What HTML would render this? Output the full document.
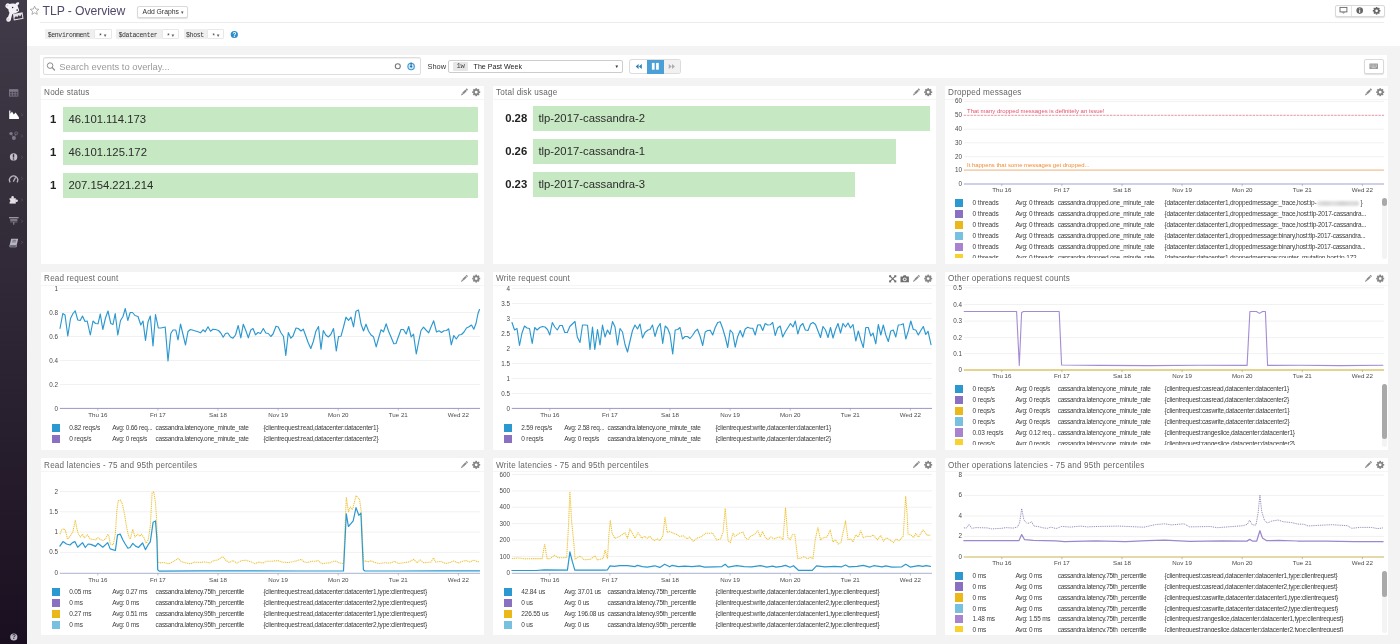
<!DOCTYPE html><html lang="en"><head><meta charset="utf-8"><title>TLP - Overview</title><style>
html,body{margin:0;padding:0}
body{width:1400px;height:644px;overflow:hidden;background:#f3f3f3;font-family:"Liberation Sans",sans-serif;position:relative;color:#333}
div,span{box-sizing:border-box}
#wrap{position:absolute;left:0;top:0;width:1400px;height:644px;overflow:hidden;will-change:transform;transform:translateZ(0)}
.abs{position:absolute}
#side{position:absolute;left:0;top:0;width:27px;height:644px;background:linear-gradient(#413b49 0%,#352e3b 30%,#2a2130 62%,#1a0f20 100%)}
#hdr{position:absolute;left:27px;top:0;width:1373px;height:46px;background:#fff}
#hline{position:absolute;left:40px;top:22px;width:1344px;height:1px;background:#ececec}
#title{position:absolute;left:42.6px;top:2.9px;font-size:12.2px;line-height:16px;color:#52486a;white-space:nowrap;letter-spacing:-0.08px}
.btn{position:absolute;background:#fff;border:1px solid #d9d9d9;border-radius:2px;box-shadow:0 1px 1px rgba(0,0,0,.12)}
#addg{left:137px;top:5.5px;width:50.5px;height:12px;font-size:6.8px;line-height:10.5px;color:#333;padding-left:4.6px;white-space:nowrap}
.tv{position:absolute;top:29.3px;height:10px;font-family:"Liberation Mono",monospace;font-size:6.5px;letter-spacing:-0.37px;line-height:10px;color:#333;white-space:nowrap}
.tv .n{position:absolute;left:0;top:0;height:10px;background:#efefef;padding-left:2.4px;padding-top:1.6px;line-height:10px;overflow:hidden;border-radius:1px 0 0 1px}
.tv .v{position:absolute;top:0;height:10px;background:#fff;border:1px solid #e8e8e8;border-radius:1px;padding-left:3.2px;padding-top:1.8px;font-size:6.4px;line-height:8px;overflow:hidden;color:#444}
#srow{position:absolute;left:40px;top:55px;width:1347px;height:22.5px;background:#fff}
#sbox{position:absolute;left:42.7px;top:57px;width:378.3px;height:17.8px;border:1px solid #dedede;border-radius:2px;background:#fff;box-shadow:inset 0 1px 1px rgba(0,0,0,.06)}
#sph{position:absolute;left:59.3px;top:59.5px;font-size:9.4px;line-height:14px;color:#9a9a9a;white-space:nowrap}
#show{position:absolute;left:427.5px;top:61.8px;font-size:7.4px;line-height:10px;color:#333}
#sel{position:absolute;left:448.4px;top:59.5px;width:175px;height:13px;border:1px solid #ccc;border-radius:2px;background:#fff}
#w1{position:absolute;left:453px;top:62.1px;width:15px;height:8.8px;background:#e6e6e6;border-radius:1px;font-family:"Liberation Mono",monospace;font-size:7.2px;letter-spacing:-0.4px;line-height:9.6px;text-align:center;color:#444}
#pw{position:absolute;left:473.6px;top:61.9px;font-size:7.1px;line-height:10px;color:#222;white-space:nowrap}
.panel{position:absolute;width:443px;height:178px;background:#fff;border-radius:1px}
.ptitle{position:absolute;font-size:8.15px;letter-spacing:0.19px;line-height:12px;color:#666;white-space:nowrap}
.phl{position:absolute;height:1px;background:#f5f5f5}
.bar{position:absolute;height:25px;background:#c6e8c2}
.bl{position:absolute;font-size:11.3px;line-height:25px;color:#2c2c2c;white-space:nowrap}
.bv{position:absolute;font-size:11.3px;line-height:25px;color:#222;font-weight:bold;white-space:nowrap;text-align:right}
.lg{position:absolute;overflow:hidden}
.lt{position:absolute;font-size:6.5px;letter-spacing:-0.12px;line-height:9px;color:#3c3c3c;white-space:nowrap}
.blr{display:inline-block;width:42px;height:5px;vertical-align:-0.5px;margin:0 1px;background:linear-gradient(90deg,#e4e4e4,#d6d6d6 20%,#e2e2e2 40%,#d4d4d4 60%,#dedede 80%,#d8d8d8);filter:blur(1px);border-radius:2px}
.sw{position:absolute;width:8.3px;height:8.3px}
.sbt{position:absolute;width:5px;background:#f3f3f3;border-radius:2.5px}
.sbh{position:absolute;width:5px;background:#a9a9a9;border-radius:2.5px}
svg text{font-family:"Liberation Sans",sans-serif}
</style></head><body><div id="wrap">
<div id="side"></div><div id="hdr"></div><div id="hline"></div>
<div id="title">TLP - Overview</div>
<div class="btn" id="addg">Add Graphs <span style="font-size:5px;color:#555">&#9662;</span></div>
<div class="tv" style="left:45.4px;width:66.4px"><span class="n" style="width:49px">$environment</span><span class="v" style="left:49px;width:17.4px">*<span style="font-size:4.6px;margin-left:1.6px;vertical-align:0.6px;color:#666">&#9660;</span></span></div>
<div class="tv" style="left:116px;width:63.400000000000006px"><span class="n" style="width:46.2px">$datacenter</span><span class="v" style="left:46.2px;width:17.2px">*<span style="font-size:4.6px;margin-left:1.6px;vertical-align:0.6px;color:#666">&#9660;</span></span></div>
<div class="tv" style="left:183.7px;width:40.6px"><span class="n" style="width:23.8px">$host</span><span class="v" style="left:23.8px;width:16.8px">*<span style="font-size:4.6px;margin-left:1.6px;vertical-align:0.6px;color:#666">&#9660;</span></span></div>
<div id="srow"></div><div id="sbox"></div><div id="sph">Search events to overlay...</div>
<div id="show">Show</div><div id="sel"></div><div id="w1">1w</div><div id="pw">The Past Week</div>
<div class="abs" style="left:614.6px;top:63.6px;font-size:4.6px;line-height:6px;color:#333">&#9660;</div>
<div class="abs" style="left:630.4px;top:60.4px;width:49.6px;height:12.7px;border-radius:2px;box-shadow:0 0 0 1px #dcdcdc;background:#fff"></div>
<div class="abs" style="left:646.5px;top:59.8px;width:17.2px;height:13.8px;background:#4a9fd6"></div>
<div class="abs" style="left:663.7px;top:60.4px;width:16.3px;height:12.7px;background:#f1f1f1;border-radius:0 2px 2px 0"></div>
<div class="btn" style="left:1334.5px;top:5px;width:50px;height:12px"></div>
<div class="abs" style="left:1351px;top:6px;width:1px;height:10px;background:#e4e4e4"></div>
<div class="btn" style="left:1364px;top:59px;width:19.5px;height:14.5px"></div>
<div class="panel" style="left:40.5px;top:86px;height:177.6px"></div>
<div class="ptitle" style="left:44.1px;top:87.4px">Node status</div>
<div class="phl" style="left:40.5px;top:99px;width:443px"></div>
<div class="panel" style="left:492.5px;top:86px;height:177.6px"></div>
<div class="ptitle" style="left:496.1px;top:87.4px">Total disk usage</div>
<div class="phl" style="left:492.5px;top:99px;width:443px"></div>
<div class="panel" style="left:944.5px;top:86px;height:177.6px"></div>
<div class="ptitle" style="left:948.1px;top:87.4px">Dropped messages</div>
<div class="phl" style="left:944.5px;top:99px;width:443px"></div>
<div class="panel" style="left:40.5px;top:271.5px;height:178px"></div>
<div class="ptitle" style="left:44.1px;top:273.2px">Read request count</div>
<div class="phl" style="left:40.5px;top:284.5px;width:443px"></div>
<div class="panel" style="left:492.5px;top:271.5px;height:178px"></div>
<div class="ptitle" style="left:496.1px;top:273.2px">Write request count</div>
<div class="phl" style="left:492.5px;top:284.5px;width:443px"></div>
<div class="panel" style="left:944.5px;top:271.5px;height:178px"></div>
<div class="ptitle" style="left:948.1px;top:273.2px">Other operations request counts</div>
<div class="phl" style="left:944.5px;top:284.5px;width:443px"></div>
<div class="panel" style="left:40.5px;top:458.2px;height:177.3px"></div>
<div class="ptitle" style="left:44.1px;top:460.3px">Read latencies - 75 and 95th percentiles</div>
<div class="phl" style="left:40.5px;top:471.2px;width:443px"></div>
<div class="panel" style="left:492.5px;top:458.2px;height:177.3px"></div>
<div class="ptitle" style="left:496.1px;top:460.3px">Write latencies - 75 and 95th percentiles</div>
<div class="phl" style="left:492.5px;top:471.2px;width:443px"></div>
<div class="panel" style="left:944.5px;top:458.2px;height:177.3px"></div>
<div class="ptitle" style="left:948.1px;top:460.3px">Other operations latencies - 75 and 95th percentiles</div>
<div class="phl" style="left:944.5px;top:471.2px;width:443px"></div>
<div class="bar" style="left:63px;top:106.6px;width:415px"></div>
<div class="bv" style="left:40px;top:106.6px;width:16.2px">1</div>
<div class="bl" style="left:68.4px;top:106.6px">46.101.114.173</div>
<div class="bar" style="left:63px;top:139.7px;width:415px"></div>
<div class="bv" style="left:40px;top:139.7px;width:16.2px">1</div>
<div class="bl" style="left:68.4px;top:139.7px">46.101.125.172</div>
<div class="bar" style="left:63px;top:172.8px;width:415px"></div>
<div class="bv" style="left:40px;top:172.8px;width:16.2px">1</div>
<div class="bl" style="left:68.4px;top:172.8px">207.154.221.214</div>
<div class="bar" style="left:533px;top:106.3px;width:396.6px"></div>
<div class="bv" style="left:495px;top:106.3px;width:32.2px">0.28</div>
<div class="bl" style="left:538.4px;top:106.3px">tlp-2017-cassandra-2</div>
<div class="bar" style="left:533px;top:139.2px;width:363.0px"></div>
<div class="bv" style="left:495px;top:139.2px;width:32.2px">0.26</div>
<div class="bl" style="left:538.4px;top:139.2px">tlp-2017-cassandra-1</div>
<div class="bar" style="left:533px;top:172.1px;width:322.0px"></div>
<div class="bv" style="left:495px;top:172.1px;width:32.2px">0.23</div>
<div class="bl" style="left:538.4px;top:172.1px">tlp-2017-cassandra-3</div>
<div class="lg" style="left:40.5px;top:424px;width:436px;height:24px">
<div class="sw" style="left:11.3px;top:0.0px;background:#2b98d0"></div>
<div class="lt" style="left:28.7px;top:-0.8px;letter-spacing:-0.12px">0.82 reqs/s</div>
<div class="lt" style="left:71.8px;top:-0.8px;letter-spacing:-0.24px">Avg: 0.66 req...</div>
<div class="lt" style="left:115.1px;top:-0.8px;letter-spacing:-0.29px">cassandra.latency.one_minute_rate</div>
<div class="lt" style="left:222.9px;top:-0.8px;letter-spacing:-0.225px">{clientrequest:read,datacenter:datacenter1}</div>
<div class="sw" style="left:11.3px;top:11.0px;background:#8a70c0"></div>
<div class="lt" style="left:28.7px;top:10.2px;letter-spacing:-0.12px">0 reqs/s</div>
<div class="lt" style="left:71.8px;top:10.2px;letter-spacing:-0.24px">Avg: 0 reqs/s</div>
<div class="lt" style="left:115.1px;top:10.2px;letter-spacing:-0.29px">cassandra.latency.one_minute_rate</div>
<div class="lt" style="left:222.9px;top:10.2px;letter-spacing:-0.225px">{clientrequest:read,datacenter:datacenter2}</div>
</div>
<div class="lg" style="left:492.5px;top:424px;width:436px;height:24px">
<div class="sw" style="left:11.3px;top:0.0px;background:#2b98d0"></div>
<div class="lt" style="left:28.7px;top:-0.8px;letter-spacing:-0.12px">2.59 reqs/s</div>
<div class="lt" style="left:71.8px;top:-0.8px;letter-spacing:-0.24px">Avg: 2.58 req...</div>
<div class="lt" style="left:115.1px;top:-0.8px;letter-spacing:-0.29px">cassandra.latency.one_minute_rate</div>
<div class="lt" style="left:222.9px;top:-0.8px;letter-spacing:-0.225px">{clientrequest:write,datacenter:datacenter1}</div>
<div class="sw" style="left:11.3px;top:11.0px;background:#8a70c0"></div>
<div class="lt" style="left:28.7px;top:10.2px;letter-spacing:-0.12px">0 reqs/s</div>
<div class="lt" style="left:71.8px;top:10.2px;letter-spacing:-0.24px">Avg: 0 reqs/s</div>
<div class="lt" style="left:115.1px;top:10.2px;letter-spacing:-0.29px">cassandra.latency.one_minute_rate</div>
<div class="lt" style="left:222.9px;top:10.2px;letter-spacing:-0.225px">{clientrequest:write,datacenter:datacenter2}</div>
</div>
<div class="lg" style="left:944.5px;top:384.8px;width:436px;height:60px">
<div class="sw" style="left:10.5px;top:0.0px;background:#2b98d0"></div>
<div class="lt" style="left:28.1px;top:-0.8px;letter-spacing:-0.12px">0 reqs/s</div>
<div class="lt" style="left:70.9px;top:-0.8px;letter-spacing:-0.24px">Avg: 0 reqs/s</div>
<div class="lt" style="left:113.2px;top:-0.8px;letter-spacing:-0.29px">cassandra.latency.one_minute_rate</div>
<div class="lt" style="left:220px;top:-0.8px;letter-spacing:-0.225px">{clientrequest:casread,datacenter:datacenter1}</div>
<div class="sw" style="left:10.5px;top:10.9px;background:#8a70c0"></div>
<div class="lt" style="left:28.1px;top:10.2px;letter-spacing:-0.12px">0 reqs/s</div>
<div class="lt" style="left:70.9px;top:10.2px;letter-spacing:-0.24px">Avg: 0 reqs/s</div>
<div class="lt" style="left:113.2px;top:10.2px;letter-spacing:-0.29px">cassandra.latency.one_minute_rate</div>
<div class="lt" style="left:220px;top:10.2px;letter-spacing:-0.225px">{clientrequest:casread,datacenter:datacenter2}</div>
<div class="sw" style="left:10.5px;top:21.8px;background:#eab818"></div>
<div class="lt" style="left:28.1px;top:21.1px;letter-spacing:-0.12px">0 reqs/s</div>
<div class="lt" style="left:70.9px;top:21.1px;letter-spacing:-0.24px">Avg: 0 reqs/s</div>
<div class="lt" style="left:113.2px;top:21.1px;letter-spacing:-0.29px">cassandra.latency.one_minute_rate</div>
<div class="lt" style="left:220px;top:21.1px;letter-spacing:-0.225px">{clientrequest:caswrite,datacenter:datacenter1}</div>
<div class="sw" style="left:10.5px;top:32.7px;background:#78c0e0"></div>
<div class="lt" style="left:28.1px;top:32.0px;letter-spacing:-0.12px">0 reqs/s</div>
<div class="lt" style="left:70.9px;top:32.0px;letter-spacing:-0.24px">Avg: 0 reqs/s</div>
<div class="lt" style="left:113.2px;top:32.0px;letter-spacing:-0.29px">cassandra.latency.one_minute_rate</div>
<div class="lt" style="left:220px;top:32.0px;letter-spacing:-0.225px">{clientrequest:caswrite,datacenter:datacenter2}</div>
<div class="sw" style="left:10.5px;top:43.6px;background:#a884d0"></div>
<div class="lt" style="left:28.1px;top:42.9px;letter-spacing:-0.12px">0.03 reqs/s</div>
<div class="lt" style="left:70.9px;top:42.9px;letter-spacing:-0.24px">Avg: 0.12 req...</div>
<div class="lt" style="left:113.2px;top:42.9px;letter-spacing:-0.29px">cassandra.latency.one_minute_rate</div>
<div class="lt" style="left:220px;top:42.9px;letter-spacing:-0.225px">{clientrequest:rangeslice,datacenter:datacenter1}</div>
<div class="sw" style="left:10.5px;top:54.5px;background:#f8d230"></div>
<div class="lt" style="left:28.1px;top:53.8px;letter-spacing:-0.12px">0 reqs/s</div>
<div class="lt" style="left:70.9px;top:53.8px;letter-spacing:-0.24px">Avg: 0 reqs/s</div>
<div class="lt" style="left:113.2px;top:53.8px;letter-spacing:-0.29px">cassandra.latency.one_minute_rate</div>
<div class="lt" style="left:220px;top:53.8px;letter-spacing:-0.225px">{clientrequest:rangeslice,datacenter:datacenter2}</div>
</div>
<div class="sbt" style="left:1382.0px;top:384px;height:63px"></div>
<div class="sbh" style="left:1382.0px;top:384.4px;height:54.80000000000001px"></div>
<div class="lg" style="left:944.5px;top:199px;width:436px;height:59.2px">
<div class="sw" style="left:10.5px;top:0.0px;background:#2b98d0"></div>
<div class="lt" style="left:28.1px;top:-0.8px;letter-spacing:-0.12px">0 threads</div>
<div class="lt" style="left:70.9px;top:-0.8px;letter-spacing:-0.24px">Avg: 0 threads</div>
<div class="lt" style="left:113.2px;top:-0.8px;letter-spacing:-0.29px">cassandra.dropped.one_minute_rate</div>
<div class="lt" style="left:220px;top:-0.8px;letter-spacing:-0.225px">{datacenter:datacenter1,droppedmessage:_trace,host:ip-<span class="blr"></span>}</div>
<div class="sw" style="left:10.5px;top:11.0px;background:#8a70c0"></div>
<div class="lt" style="left:28.1px;top:10.2px;letter-spacing:-0.12px">0 threads</div>
<div class="lt" style="left:70.9px;top:10.2px;letter-spacing:-0.24px">Avg: 0 threads</div>
<div class="lt" style="left:113.2px;top:10.2px;letter-spacing:-0.29px">cassandra.dropped.one_minute_rate</div>
<div class="lt" style="left:220px;top:10.2px;letter-spacing:-0.225px">{datacenter:datacenter1,droppedmessage:_trace,host:tlp-2017-cassandra...</div>
<div class="sw" style="left:10.5px;top:22.0px;background:#eab818"></div>
<div class="lt" style="left:28.1px;top:21.2px;letter-spacing:-0.12px">0 threads</div>
<div class="lt" style="left:70.9px;top:21.2px;letter-spacing:-0.24px">Avg: 0 threads</div>
<div class="lt" style="left:113.2px;top:21.2px;letter-spacing:-0.29px">cassandra.dropped.one_minute_rate</div>
<div class="lt" style="left:220px;top:21.2px;letter-spacing:-0.225px">{datacenter:datacenter1,droppedmessage:_trace,host:tlp-2017-cassandra...</div>
<div class="sw" style="left:10.5px;top:33.0px;background:#78c0e0"></div>
<div class="lt" style="left:28.1px;top:32.2px;letter-spacing:-0.12px">0 threads</div>
<div class="lt" style="left:70.9px;top:32.2px;letter-spacing:-0.24px">Avg: 0 threads</div>
<div class="lt" style="left:113.2px;top:32.2px;letter-spacing:-0.29px">cassandra.dropped.one_minute_rate</div>
<div class="lt" style="left:220px;top:32.2px;letter-spacing:-0.225px">{datacenter:datacenter1,droppedmessage:binary,host:tlp-2017-cassandra...</div>
<div class="sw" style="left:10.5px;top:44.0px;background:#a884d0"></div>
<div class="lt" style="left:28.1px;top:43.2px;letter-spacing:-0.12px">0 threads</div>
<div class="lt" style="left:70.9px;top:43.2px;letter-spacing:-0.24px">Avg: 0 threads</div>
<div class="lt" style="left:113.2px;top:43.2px;letter-spacing:-0.29px">cassandra.dropped.one_minute_rate</div>
<div class="lt" style="left:220px;top:43.2px;letter-spacing:-0.225px">{datacenter:datacenter1,droppedmessage:binary,host:tlp-2017-cassandra...</div>
<div class="sw" style="left:10.5px;top:55.0px;background:#f8d230"></div>
<div class="lt" style="left:28.1px;top:54.2px;letter-spacing:-0.12px">0 threads</div>
<div class="lt" style="left:70.9px;top:54.2px;letter-spacing:-0.24px">Avg: 0 threads</div>
<div class="lt" style="left:113.2px;top:54.2px;letter-spacing:-0.29px">cassandra.dropped.one_minute_rate</div>
<div class="lt" style="left:220px;top:54.2px;letter-spacing:-0.225px">{datacenter:datacenter1,droppedmessage:counter_mutation,host:ip-172-...</div>
</div>
<div class="sbt" style="left:1382.0px;top:198px;height:61px"></div>
<div class="sbh" style="left:1382.0px;top:198.3px;height:8.199999999999989px"></div>
<div class="lg" style="left:40.5px;top:588.2px;width:436px;height:44px">
<div class="sw" style="left:11.3px;top:0.0px;background:#2b98d0"></div>
<div class="lt" style="left:28.7px;top:-0.8px;letter-spacing:-0.12px">0.05 ms</div>
<div class="lt" style="left:71.8px;top:-0.8px;letter-spacing:-0.24px">Avg: 0.27 ms</div>
<div class="lt" style="left:115.1px;top:-0.8px;letter-spacing:-0.29px">cassandra.latency.75th_percentile</div>
<div class="lt" style="left:222.9px;top:-0.8px;letter-spacing:-0.225px">{clientrequest:read,datacenter:datacenter1,type:clientrequest}</div>
<div class="sw" style="left:11.3px;top:10.8px;background:#8a70c0"></div>
<div class="lt" style="left:28.7px;top:10.1px;letter-spacing:-0.12px">0 ms</div>
<div class="lt" style="left:71.8px;top:10.1px;letter-spacing:-0.24px">Avg: 0 ms</div>
<div class="lt" style="left:115.1px;top:10.1px;letter-spacing:-0.29px">cassandra.latency.75th_percentile</div>
<div class="lt" style="left:222.9px;top:10.1px;letter-spacing:-0.225px">{clientrequest:read,datacenter:datacenter2,type:clientrequest}</div>
<div class="sw" style="left:11.3px;top:21.7px;background:#eab818"></div>
<div class="lt" style="left:28.7px;top:20.9px;letter-spacing:-0.12px">0.27 ms</div>
<div class="lt" style="left:71.8px;top:20.9px;letter-spacing:-0.24px">Avg: 0.51 ms</div>
<div class="lt" style="left:115.1px;top:20.9px;letter-spacing:-0.29px">cassandra.latency.95th_percentile</div>
<div class="lt" style="left:222.9px;top:20.9px;letter-spacing:-0.225px">{clientrequest:read,datacenter:datacenter1,type:clientrequest}</div>
<div class="sw" style="left:11.3px;top:32.5px;background:#78c0e0"></div>
<div class="lt" style="left:28.7px;top:31.8px;letter-spacing:-0.12px">0 ms</div>
<div class="lt" style="left:71.8px;top:31.8px;letter-spacing:-0.24px">Avg: 0 ms</div>
<div class="lt" style="left:115.1px;top:31.8px;letter-spacing:-0.29px">cassandra.latency.95th_percentile</div>
<div class="lt" style="left:222.9px;top:31.8px;letter-spacing:-0.225px">{clientrequest:read,datacenter:datacenter2,type:clientrequest}</div>
</div>
<div class="lg" style="left:492.5px;top:588.2px;width:436px;height:44px">
<div class="sw" style="left:11.3px;top:0.0px;background:#2b98d0"></div>
<div class="lt" style="left:28.7px;top:-0.8px;letter-spacing:-0.12px">42.84 us</div>
<div class="lt" style="left:71.8px;top:-0.8px;letter-spacing:-0.24px">Avg: 37.01 us</div>
<div class="lt" style="left:115.1px;top:-0.8px;letter-spacing:-0.29px">cassandra.latency.75th_percentile</div>
<div class="lt" style="left:222.9px;top:-0.8px;letter-spacing:-0.225px">{clientrequest:write,datacenter:datacenter1,type:clientrequest}</div>
<div class="sw" style="left:11.3px;top:10.8px;background:#8a70c0"></div>
<div class="lt" style="left:28.7px;top:10.1px;letter-spacing:-0.12px">0 us</div>
<div class="lt" style="left:71.8px;top:10.1px;letter-spacing:-0.24px">Avg: 0 us</div>
<div class="lt" style="left:115.1px;top:10.1px;letter-spacing:-0.29px">cassandra.latency.75th_percentile</div>
<div class="lt" style="left:222.9px;top:10.1px;letter-spacing:-0.225px">{clientrequest:write,datacenter:datacenter2,type:clientrequest}</div>
<div class="sw" style="left:11.3px;top:21.7px;background:#eab818"></div>
<div class="lt" style="left:28.7px;top:20.9px;letter-spacing:-0.12px">226.55 us</div>
<div class="lt" style="left:71.8px;top:20.9px;letter-spacing:-0.24px">Avg: 196.08 us</div>
<div class="lt" style="left:115.1px;top:20.9px;letter-spacing:-0.29px">cassandra.latency.95th_percentile</div>
<div class="lt" style="left:222.9px;top:20.9px;letter-spacing:-0.225px">{clientrequest:write,datacenter:datacenter1,type:clientrequest}</div>
<div class="sw" style="left:11.3px;top:32.5px;background:#78c0e0"></div>
<div class="lt" style="left:28.7px;top:31.8px;letter-spacing:-0.12px">0 us</div>
<div class="lt" style="left:71.8px;top:31.8px;letter-spacing:-0.24px">Avg: 0 us</div>
<div class="lt" style="left:115.1px;top:31.8px;letter-spacing:-0.29px">cassandra.latency.95th_percentile</div>
<div class="lt" style="left:222.9px;top:31.8px;letter-spacing:-0.225px">{clientrequest:write,datacenter:datacenter2,type:clientrequest}</div>
</div>
<div class="lg" style="left:944.5px;top:571.6px;width:436px;height:60.5px">
<div class="sw" style="left:10.5px;top:0.0px;background:#2b98d0"></div>
<div class="lt" style="left:28.1px;top:-0.8px;letter-spacing:-0.12px">0 ms</div>
<div class="lt" style="left:70.9px;top:-0.8px;letter-spacing:-0.24px">Avg: 0 ms</div>
<div class="lt" style="left:113.2px;top:-0.8px;letter-spacing:-0.29px">cassandra.latency.75th_percentile</div>
<div class="lt" style="left:220px;top:-0.8px;letter-spacing:-0.225px">{clientrequest:casread,datacenter:datacenter1,type:clientrequest}</div>
<div class="sw" style="left:10.5px;top:10.9px;background:#8a70c0"></div>
<div class="lt" style="left:28.1px;top:10.2px;letter-spacing:-0.12px">0 ms</div>
<div class="lt" style="left:70.9px;top:10.2px;letter-spacing:-0.24px">Avg: 0 ms</div>
<div class="lt" style="left:113.2px;top:10.2px;letter-spacing:-0.29px">cassandra.latency.75th_percentile</div>
<div class="lt" style="left:220px;top:10.2px;letter-spacing:-0.225px">{clientrequest:casread,datacenter:datacenter2,type:clientrequest}</div>
<div class="sw" style="left:10.5px;top:21.8px;background:#eab818"></div>
<div class="lt" style="left:28.1px;top:21.1px;letter-spacing:-0.12px">0 ms</div>
<div class="lt" style="left:70.9px;top:21.1px;letter-spacing:-0.24px">Avg: 0 ms</div>
<div class="lt" style="left:113.2px;top:21.1px;letter-spacing:-0.29px">cassandra.latency.75th_percentile</div>
<div class="lt" style="left:220px;top:21.1px;letter-spacing:-0.225px">{clientrequest:caswrite,datacenter:datacenter1,type:clientrequest}</div>
<div class="sw" style="left:10.5px;top:32.7px;background:#78c0e0"></div>
<div class="lt" style="left:28.1px;top:32.0px;letter-spacing:-0.12px">0 ms</div>
<div class="lt" style="left:70.9px;top:32.0px;letter-spacing:-0.24px">Avg: 0 ms</div>
<div class="lt" style="left:113.2px;top:32.0px;letter-spacing:-0.29px">cassandra.latency.75th_percentile</div>
<div class="lt" style="left:220px;top:32.0px;letter-spacing:-0.225px">{clientrequest:caswrite,datacenter:datacenter2,type:clientrequest}</div>
<div class="sw" style="left:10.5px;top:43.6px;background:#a884d0"></div>
<div class="lt" style="left:28.1px;top:42.9px;letter-spacing:-0.12px">1.48 ms</div>
<div class="lt" style="left:70.9px;top:42.9px;letter-spacing:-0.24px">Avg: 1.55 ms</div>
<div class="lt" style="left:113.2px;top:42.9px;letter-spacing:-0.29px">cassandra.latency.75th_percentile</div>
<div class="lt" style="left:220px;top:42.9px;letter-spacing:-0.225px">{clientrequest:rangeslice,datacenter:datacenter1,type:clientrequest}</div>
<div class="sw" style="left:10.5px;top:54.5px;background:#f8d230"></div>
<div class="lt" style="left:28.1px;top:53.8px;letter-spacing:-0.12px">0 ms</div>
<div class="lt" style="left:70.9px;top:53.8px;letter-spacing:-0.24px">Avg: 0 ms</div>
<div class="lt" style="left:113.2px;top:53.8px;letter-spacing:-0.29px">cassandra.latency.75th_percentile</div>
<div class="lt" style="left:220px;top:53.8px;letter-spacing:-0.225px">{clientrequest:rangeslice,datacenter:datacenter2,type:clientrequest}</div>
</div>
<div class="sbt" style="left:1382.0px;top:571px;height:62px"></div>
<div class="sbh" style="left:1382.0px;top:571.3px;height:25.700000000000045px"></div>
<svg class="abs" style="left:0;top:0" width="1400" height="644" viewBox="0 0 1400 644"><line x1="963.8" x2="1384.0" y1="101.4" y2="101.4" stroke="#f1f1f1" stroke-width="1"/><line x1="963.8" x2="1384.0" y1="115.3" y2="115.3" stroke="#f1f1f1" stroke-width="1"/><line x1="963.8" x2="1384.0" y1="129.2" y2="129.2" stroke="#f1f1f1" stroke-width="1"/><line x1="963.8" x2="1384.0" y1="142.8" y2="142.8" stroke="#f1f1f1" stroke-width="1"/><line x1="963.8" x2="1384.0" y1="156.7" y2="156.7" stroke="#f1f1f1" stroke-width="1"/><line x1="963.8" x2="1384.0" y1="170.1" y2="170.1" stroke="#f1f1f1" stroke-width="1"/><text x="962.1" y="103.4" text-anchor="end" font-size="6.3" fill="#4a4a4a">60</text><text x="962.1" y="117.3" text-anchor="end" font-size="6.3" fill="#4a4a4a">50</text><text x="962.1" y="131.2" text-anchor="end" font-size="6.3" fill="#4a4a4a">40</text><text x="962.1" y="144.8" text-anchor="end" font-size="6.3" fill="#4a4a4a">30</text><text x="962.1" y="158.7" text-anchor="end" font-size="6.3" fill="#4a4a4a">20</text><text x="962.1" y="172.1" text-anchor="end" font-size="6.3" fill="#4a4a4a">10</text><text x="962.1" y="186.0" text-anchor="end" font-size="6.3" fill="#4a4a4a">0</text><line x1="963.8" x2="1384.0" y1="115.3" y2="115.3" stroke="#ea6f86" stroke-width="0.7" stroke-dasharray="2.2 1.2"/><line x1="963.8" x2="1384.0" y1="170.1" y2="170.1" stroke="#f4ab66" stroke-width="0.8"/><text x="967" y="112.6" font-size="6.1" fill="#e4506a" textLength="137.5" lengthAdjust="spacingAndGlyphs">That many dropped messages is definitely an issue!</text><text x="967" y="167.2" font-size="6.1" fill="#f08a30" textLength="122.5" lengthAdjust="spacingAndGlyphs">It happens that some messages get dropped...</text><line x1="963.8" x2="1384.0" y1="184" y2="184" stroke="#a2a2ce" stroke-width="1.15"/><line x1="1001.8" x2="1001.8" y1="184" y2="186.2" stroke="#999" stroke-width="0.6"/><text x="1001.8" y="192.4" text-anchor="middle" font-size="6.2" fill="#4a4a4a">Thu 16</text><line x1="1061.9" x2="1061.9" y1="184" y2="186.2" stroke="#999" stroke-width="0.6"/><text x="1061.9" y="192.4" text-anchor="middle" font-size="6.2" fill="#4a4a4a">Fri 17</text><line x1="1122.0" x2="1122.0" y1="184" y2="186.2" stroke="#999" stroke-width="0.6"/><text x="1122.0" y="192.4" text-anchor="middle" font-size="6.2" fill="#4a4a4a">Sat 18</text><line x1="1182.1" x2="1182.1" y1="184" y2="186.2" stroke="#999" stroke-width="0.6"/><text x="1182.1" y="192.4" text-anchor="middle" font-size="6.2" fill="#4a4a4a">Nov 19</text><line x1="1242.2" x2="1242.2" y1="184" y2="186.2" stroke="#999" stroke-width="0.6"/><text x="1242.2" y="192.4" text-anchor="middle" font-size="6.2" fill="#4a4a4a">Mon 20</text><line x1="1302.3" x2="1302.3" y1="184" y2="186.2" stroke="#999" stroke-width="0.6"/><text x="1302.3" y="192.4" text-anchor="middle" font-size="6.2" fill="#4a4a4a">Tue 21</text><line x1="1362.4" x2="1362.4" y1="184" y2="186.2" stroke="#999" stroke-width="0.6"/><text x="1362.4" y="192.4" text-anchor="middle" font-size="6.2" fill="#4a4a4a">Wed 22</text><line x1="59.8" x2="480.0" y1="288.5" y2="288.5" stroke="#f1f1f1" stroke-width="1"/><line x1="59.8" x2="480.0" y1="312.5" y2="312.5" stroke="#f1f1f1" stroke-width="1"/><line x1="59.8" x2="480.0" y1="336.5" y2="336.5" stroke="#f1f1f1" stroke-width="1"/><line x1="59.8" x2="480.0" y1="360.5" y2="360.5" stroke="#f1f1f1" stroke-width="1"/><line x1="59.8" x2="480.0" y1="384.5" y2="384.5" stroke="#f1f1f1" stroke-width="1"/><text x="58.1" y="290.5" text-anchor="end" font-size="6.3" fill="#4a4a4a">1</text><text x="58.1" y="314.5" text-anchor="end" font-size="6.3" fill="#4a4a4a">0.8</text><text x="58.1" y="338.5" text-anchor="end" font-size="6.3" fill="#4a4a4a">0.6</text><text x="58.1" y="362.5" text-anchor="end" font-size="6.3" fill="#4a4a4a">0.4</text><text x="58.1" y="386.5" text-anchor="end" font-size="6.3" fill="#4a4a4a">0.2</text><text x="58.1" y="410.5" text-anchor="end" font-size="6.3" fill="#4a4a4a">0</text><line x1="59.8" x2="480.0" y1="408.4" y2="408.4" stroke="#9a98c6" stroke-width="1.0"/><line x1="97.8" x2="97.8" y1="408.4" y2="410.59999999999997" stroke="#999" stroke-width="0.6"/><text x="97.8" y="416.8" text-anchor="middle" font-size="6.2" fill="#4a4a4a">Thu 16</text><line x1="157.9" x2="157.9" y1="408.4" y2="410.59999999999997" stroke="#999" stroke-width="0.6"/><text x="157.9" y="416.8" text-anchor="middle" font-size="6.2" fill="#4a4a4a">Fri 17</text><line x1="218.0" x2="218.0" y1="408.4" y2="410.59999999999997" stroke="#999" stroke-width="0.6"/><text x="218.0" y="416.8" text-anchor="middle" font-size="6.2" fill="#4a4a4a">Sat 18</text><line x1="278.1" x2="278.1" y1="408.4" y2="410.59999999999997" stroke="#999" stroke-width="0.6"/><text x="278.1" y="416.8" text-anchor="middle" font-size="6.2" fill="#4a4a4a">Nov 19</text><line x1="338.2" x2="338.2" y1="408.4" y2="410.59999999999997" stroke="#999" stroke-width="0.6"/><text x="338.2" y="416.8" text-anchor="middle" font-size="6.2" fill="#4a4a4a">Mon 20</text><line x1="398.3" x2="398.3" y1="408.4" y2="410.59999999999997" stroke="#999" stroke-width="0.6"/><text x="398.3" y="416.8" text-anchor="middle" font-size="6.2" fill="#4a4a4a">Tue 21</text><line x1="458.4" x2="458.4" y1="408.4" y2="410.59999999999997" stroke="#999" stroke-width="0.6"/><text x="458.4" y="416.8" text-anchor="middle" font-size="6.2" fill="#4a4a4a">Wed 22</text><polyline points="60.0,328.5 62.8,313.5 65,315 67.8,336 70.5,318.5 73,313.5 75.2,310.8 77.8,320 80.2,320.5 82.5,316 85,321.5 87.2,321 90.3,335 93,321 95.5,323.5 98,323.8 100.3,314 102.8,329.5 105.5,318 108,311 110.8,323.5 113,324.5 115.2,313.5 117.8,335 120.5,320.5 123,316.5 125.3,308.5 127.8,320.5 130.2,312.5 132.5,312.5 135,315.5 138,316.5 140.8,325 143,321 145.5,340.5 148,322 150.3,316 153,346 155.5,314.5 158.3,328 161,328 165.2,327 168,361 170.8,333.5 173,330 175.8,330 178,340 180.5,324 185.5,345 188,331.5 190.5,329.5 195.5,331 198,331.8 200.5,332.8 203,329.8 205.2,331.8 208,326.8 210.5,331.2 213,329.2 215.5,329.5 218.5,330.5 220.8,333 223.2,337.2 225.5,333.5 227.8,333 230.5,337 233,338.2 235.5,335 238.2,325.5 240.8,337.8 243.3,324.2 245.8,330.5 248.3,337.8 250.8,330 253,328.5 255.5,334.8 258,332.5 260.5,333.5 263.3,328.5 265.8,333 268.3,333.5 270.8,336.5 273,334 276,326.2 278.3,327 280.8,332.5 283.5,336.5 285.8,355.5 288.3,332.5 290.8,338.2 293,336 296,328 298.3,328.5 301,331 303.3,329.2 305.8,336 308.3,343 310.8,348.5 313.3,341.5 315.8,331.5 318.5,326.5 321,349.2 323.3,330.5 325.8,335 328.3,337 330.8,334.5 333.5,328.5 336.3,351 338.5,336.5 341,336.2 343.5,327 346,317.2 348.5,320.5 351,317.2 353.5,326.8 356,311.2 358.5,310 361,324 363.5,331 366,324.2 368.5,331 371,335 373.5,336.8 376.2,346.8 378.5,338.5 381,329.8 383.5,331.8 386.2,323.8 388.5,331 391,337 393.8,343.8 396,343.5 398.5,336.5 401,329.5 403.5,329.5 406.2,334 408.7,326.5 411.2,337 413.5,334.2 416.3,354 418.8,341 421,330.5 423.5,327.2 426,330 428.7,332.8 431.2,326.5 433.7,320.8 436.5,332 439,330.8 441.5,332.5 444,330.8 446.5,330.5 448.7,328.8 451.3,344.8 453.8,335.5 456.3,339 459,335 461.5,334.5 464,332 466.5,328 469,326.8 471.5,325 473.8,329.2 476,323.5 478,313.5 479.5,309.5" fill="none" stroke="#2b98d0" stroke-width="1.15" stroke-linejoin="round" stroke-linecap="round" opacity="1"/><line x1="511.8" x2="932.0" y1="288.5" y2="288.5" stroke="#f1f1f1" stroke-width="1"/><line x1="511.8" x2="932.0" y1="303.5" y2="303.5" stroke="#f1f1f1" stroke-width="1"/><line x1="511.8" x2="932.0" y1="318.5" y2="318.5" stroke="#f1f1f1" stroke-width="1"/><line x1="511.8" x2="932.0" y1="333.5" y2="333.5" stroke="#f1f1f1" stroke-width="1"/><line x1="511.8" x2="932.0" y1="348.5" y2="348.5" stroke="#f1f1f1" stroke-width="1"/><line x1="511.8" x2="932.0" y1="363.5" y2="363.5" stroke="#f1f1f1" stroke-width="1"/><line x1="511.8" x2="932.0" y1="378.5" y2="378.5" stroke="#f1f1f1" stroke-width="1"/><line x1="511.8" x2="932.0" y1="393.5" y2="393.5" stroke="#f1f1f1" stroke-width="1"/><text x="510.1" y="290.5" text-anchor="end" font-size="6.3" fill="#4a4a4a">4</text><text x="510.1" y="305.5" text-anchor="end" font-size="6.3" fill="#4a4a4a">3.5</text><text x="510.1" y="320.5" text-anchor="end" font-size="6.3" fill="#4a4a4a">3</text><text x="510.1" y="335.5" text-anchor="end" font-size="6.3" fill="#4a4a4a">2.5</text><text x="510.1" y="350.5" text-anchor="end" font-size="6.3" fill="#4a4a4a">2</text><text x="510.1" y="365.5" text-anchor="end" font-size="6.3" fill="#4a4a4a">1.5</text><text x="510.1" y="380.5" text-anchor="end" font-size="6.3" fill="#4a4a4a">1</text><text x="510.1" y="395.5" text-anchor="end" font-size="6.3" fill="#4a4a4a">0.5</text><text x="510.1" y="410.5" text-anchor="end" font-size="6.3" fill="#4a4a4a">0</text><line x1="511.8" x2="932.0" y1="408.4" y2="408.4" stroke="#9a98c6" stroke-width="1.0"/><line x1="549.8" x2="549.8" y1="408.4" y2="410.59999999999997" stroke="#999" stroke-width="0.6"/><text x="549.8" y="416.8" text-anchor="middle" font-size="6.2" fill="#4a4a4a">Thu 16</text><line x1="609.9" x2="609.9" y1="408.4" y2="410.59999999999997" stroke="#999" stroke-width="0.6"/><text x="609.9" y="416.8" text-anchor="middle" font-size="6.2" fill="#4a4a4a">Fri 17</text><line x1="670.0" x2="670.0" y1="408.4" y2="410.59999999999997" stroke="#999" stroke-width="0.6"/><text x="670.0" y="416.8" text-anchor="middle" font-size="6.2" fill="#4a4a4a">Sat 18</text><line x1="730.1" x2="730.1" y1="408.4" y2="410.59999999999997" stroke="#999" stroke-width="0.6"/><text x="730.1" y="416.8" text-anchor="middle" font-size="6.2" fill="#4a4a4a">Nov 19</text><line x1="790.2" x2="790.2" y1="408.4" y2="410.59999999999997" stroke="#999" stroke-width="0.6"/><text x="790.2" y="416.8" text-anchor="middle" font-size="6.2" fill="#4a4a4a">Mon 20</text><line x1="850.3" x2="850.3" y1="408.4" y2="410.59999999999997" stroke="#999" stroke-width="0.6"/><text x="850.3" y="416.8" text-anchor="middle" font-size="6.2" fill="#4a4a4a">Tue 21</text><line x1="910.4" x2="910.4" y1="408.4" y2="410.59999999999997" stroke="#999" stroke-width="0.6"/><text x="910.4" y="416.8" text-anchor="middle" font-size="6.2" fill="#4a4a4a">Wed 22</text><polyline points="512,322.5 514.5,330 517,328.5 519.5,345.5 522,333 524.5,326 527,328 529.5,328.5 532.2,343.5 534.7,327.5 537,330 539.8,327.5 542.5,326.5 545,327 547.5,329.5 549.8,335 552.3,322.5 554.8,327 557.3,330 559.8,325.5 562.3,325.5 564.8,332.5 567.3,332.5 569.8,326.5 572.3,324 575,321.5 577.3,337 580,342.5 582.5,325 585,325 587.5,325.2 590,349.5 592.5,327 594.8,349.5 597.5,329.5 600,345 602.5,325 605,337 607.5,330 610,334.5 612.5,321.5 615,327 617.5,345 620,328.5 622.5,332 625,344.5 627.5,352 630,341 632.5,330.5 635,325 637.5,329 640,324 642.5,338 645,332.5 648,330 650,329.5 652.5,325 655,336.5 657.7,327.5 660.2,323.5 662.7,343.5 665.2,326 667.7,328.5 670,334.5 672.7,354 675.2,330 677.7,329.5 680,327.5 682.5,339 685,336.5 687.5,336.5 690,338.5 692.5,335.5 695,331.5 697.5,329.2 700,336 702.7,345.5 705.2,332 707.7,330.5 710.2,330.2 712.7,335 715.2,327.5 717.7,322.5 720.2,321.8 722.7,328.5 725.2,337 727.7,347.5 730.2,330 732.7,333 735.2,347.2 737.7,336.5 740.2,330.5 742.7,337 745.2,329 747.7,327.3 750.2,328.2 752.7,328.2 755.2,335 757.7,325 760.2,324.8 762.7,330.5 765.2,323.5 767.7,325 770.2,324.8 772.7,322.5 775.2,335.5 777.7,328 780.2,326 782.7,337 785.2,332 788,327.5 790.5,323.5 793,327 795.3,321 797.8,334 800.3,326 802.8,323.5 805.3,330 808,330.5 810.5,324 813,322.5 815.5,324.5 818,331 820.5,337.5 823,326.5 825.5,330 828,337.5 830.5,327.5 833,338 835.5,329.5 838,323.5 840.5,333 843,323.5 845.5,327 848,323 850.5,328 853,324.5 855.8,341 858.3,331 860.8,340 863.3,347.5 865.8,327.5 868.3,327.5 870.8,336 873,333 875.8,343.8 878.3,324.5 880.8,335 883.3,325 885.8,335 888.3,341.5 890.8,331 893.3,330 895.8,337 898.3,325 900.8,324.8 903.3,323.8 905.8,339 908.3,331 910.8,321 913.3,329.5 915.8,330 918.3,335 920.8,330.5 923.3,326.5 925.8,334.5 928,331.2 931,344.6" fill="none" stroke="#2b98d0" stroke-width="1.15" stroke-linejoin="round" stroke-linecap="round" opacity="1"/><line x1="963.8" x2="1384.0" y1="287.8" y2="287.8" stroke="#f1f1f1" stroke-width="1"/><line x1="963.8" x2="1384.0" y1="304.5" y2="304.5" stroke="#f1f1f1" stroke-width="1"/><line x1="963.8" x2="1384.0" y1="321.1" y2="321.1" stroke="#f1f1f1" stroke-width="1"/><line x1="963.8" x2="1384.0" y1="337.7" y2="337.7" stroke="#f1f1f1" stroke-width="1"/><line x1="963.8" x2="1384.0" y1="353.7" y2="353.7" stroke="#f1f1f1" stroke-width="1"/><text x="962.1" y="289.8" text-anchor="end" font-size="6.3" fill="#4a4a4a">0.5</text><text x="962.1" y="306.5" text-anchor="end" font-size="6.3" fill="#4a4a4a">0.4</text><text x="962.1" y="323.1" text-anchor="end" font-size="6.3" fill="#4a4a4a">0.3</text><text x="962.1" y="339.7" text-anchor="end" font-size="6.3" fill="#4a4a4a">0.2</text><text x="962.1" y="355.7" text-anchor="end" font-size="6.3" fill="#4a4a4a">0.1</text><text x="962.1" y="372.0" text-anchor="end" font-size="6.3" fill="#4a4a4a">0</text><line x1="963.8" x2="1384.0" y1="370" y2="370" stroke="#dcc46a" stroke-width="1.3"/><line x1="1001.8" x2="1001.8" y1="370" y2="372.2" stroke="#999" stroke-width="0.6"/><text x="1001.8" y="378.4" text-anchor="middle" font-size="6.2" fill="#4a4a4a">Thu 16</text><line x1="1061.9" x2="1061.9" y1="370" y2="372.2" stroke="#999" stroke-width="0.6"/><text x="1061.9" y="378.4" text-anchor="middle" font-size="6.2" fill="#4a4a4a">Fri 17</text><line x1="1122.0" x2="1122.0" y1="370" y2="372.2" stroke="#999" stroke-width="0.6"/><text x="1122.0" y="378.4" text-anchor="middle" font-size="6.2" fill="#4a4a4a">Sat 18</text><line x1="1182.1" x2="1182.1" y1="370" y2="372.2" stroke="#999" stroke-width="0.6"/><text x="1182.1" y="378.4" text-anchor="middle" font-size="6.2" fill="#4a4a4a">Nov 19</text><line x1="1242.2" x2="1242.2" y1="370" y2="372.2" stroke="#999" stroke-width="0.6"/><text x="1242.2" y="378.4" text-anchor="middle" font-size="6.2" fill="#4a4a4a">Mon 20</text><line x1="1302.3" x2="1302.3" y1="370" y2="372.2" stroke="#999" stroke-width="0.6"/><text x="1302.3" y="378.4" text-anchor="middle" font-size="6.2" fill="#4a4a4a">Tue 21</text><line x1="1362.4" x2="1362.4" y1="370" y2="372.2" stroke="#999" stroke-width="0.6"/><text x="1362.4" y="378.4" text-anchor="middle" font-size="6.2" fill="#4a4a4a">Wed 22</text><polyline points="964.2,311.5 1016.6,311.5 1019.3,365.4 1021.6,312.6 1023.5,311.5 1059.2,311.5 1061.6,365 1100,365.4 1150,365.6 1200,365.3 1247.1,365.4 1249.9,311.5 1256.4,311.5 1259.5,313.4 1262.6,311.5 1265.4,311.5 1267.6,365.4 1300,365.3 1340,365.6 1382.9,365.3" fill="none" stroke="#a48cd2" stroke-width="1.1" stroke-linejoin="round" stroke-linecap="round" opacity="1"/><line x1="59.8" x2="480.0" y1="491.6" y2="491.6" stroke="#f1f1f1" stroke-width="1"/><line x1="59.8" x2="480.0" y1="511.8" y2="511.8" stroke="#f1f1f1" stroke-width="1"/><line x1="59.8" x2="480.0" y1="532.1" y2="532.1" stroke="#f1f1f1" stroke-width="1"/><line x1="59.8" x2="480.0" y1="552.4" y2="552.4" stroke="#f1f1f1" stroke-width="1"/><text x="58.1" y="493.6" text-anchor="end" font-size="6.3" fill="#4a4a4a">2</text><text x="58.1" y="513.8" text-anchor="end" font-size="6.3" fill="#4a4a4a">1.5</text><text x="58.1" y="534.1" text-anchor="end" font-size="6.3" fill="#4a4a4a">1</text><text x="58.1" y="554.4" text-anchor="end" font-size="6.3" fill="#4a4a4a">0.5</text><text x="58.1" y="575.0" text-anchor="end" font-size="6.3" fill="#4a4a4a">0</text><line x1="59.8" x2="480.0" y1="573.3" y2="573.3" stroke="#98a4c6" stroke-width="0.85"/><line x1="97.8" x2="97.8" y1="573.3" y2="575.5" stroke="#999" stroke-width="0.6"/><text x="97.8" y="581.7" text-anchor="middle" font-size="6.2" fill="#4a4a4a">Thu 16</text><line x1="157.9" x2="157.9" y1="573.3" y2="575.5" stroke="#999" stroke-width="0.6"/><text x="157.9" y="581.7" text-anchor="middle" font-size="6.2" fill="#4a4a4a">Fri 17</text><line x1="218.0" x2="218.0" y1="573.3" y2="575.5" stroke="#999" stroke-width="0.6"/><text x="218.0" y="581.7" text-anchor="middle" font-size="6.2" fill="#4a4a4a">Sat 18</text><line x1="278.1" x2="278.1" y1="573.3" y2="575.5" stroke="#999" stroke-width="0.6"/><text x="278.1" y="581.7" text-anchor="middle" font-size="6.2" fill="#4a4a4a">Nov 19</text><line x1="338.2" x2="338.2" y1="573.3" y2="575.5" stroke="#999" stroke-width="0.6"/><text x="338.2" y="581.7" text-anchor="middle" font-size="6.2" fill="#4a4a4a">Mon 20</text><line x1="398.3" x2="398.3" y1="573.3" y2="575.5" stroke="#999" stroke-width="0.6"/><text x="398.3" y="581.7" text-anchor="middle" font-size="6.2" fill="#4a4a4a">Tue 21</text><line x1="458.4" x2="458.4" y1="573.3" y2="575.5" stroke="#999" stroke-width="0.6"/><text x="458.4" y="581.7" text-anchor="middle" font-size="6.2" fill="#4a4a4a">Wed 22</text><polyline points="59.9,534.2 61.6,530.0 63.7,528.6 65.5,530.7 67.5,539.1 70.0,536.3 72.8,532.1 75.3,520.2 77.0,529.3 78.4,534.2 80.4,537.0 82.5,534.2 84.6,537.7 87.4,534.9 90.2,538.8 93.0,539.4 95.5,539.8 97.9,537.7 100.7,539.8 103.2,540.5 105.6,538.8 107.7,534.2 109.1,537.0 110.2,544.0 113.3,544.7 115.4,533.5 116.8,511.1 118.2,500.7 120.3,500.0 122.4,504.2 124.5,513.9 126.6,527.2 128.6,536.3 130.3,539.1 132.8,529.3 134.9,537.0 137.7,534.2 139.8,536.3 141.5,534.2 144.0,537.7 146.1,543.3 148.2,539.8 150.3,526.5 152.1,493.0 153.8,491.6 155.5,502.8 156.6,519.5 157.4,541.9 158.0,562.1 159.9,562.9 163.7,562.5 168.9,563.8 174.0,561.2 178.1,558.4 181.1,561.6 185.6,562.9 190.7,563.8 194.6,562.1 199.7,562.5 204.9,561.9 210.0,562.9 213.9,560.6 217.7,559.9 222.9,556.7 226.1,560.6 229.3,562.5 233.1,560.6 237.0,563.1 241.5,560.6 246.0,560.3 251.1,561.9 255.0,563.8 258.9,561.9 262.7,563.1 266.6,561.2 271.7,561.2 278.1,560.6 282.0,562.1 288.4,562.5 293.6,561.6 297.4,560.6 301.3,559.3 303.9,561.9 307.7,562.5 311.6,561.2 315.4,561.2 318.0,560.6 321.9,563.8 325.7,563.1 329.6,562.9 333.4,561.2 336,561.2 339,562.8 343.5,563.5 346.3,497.2 348.4,511.8 350.4,507 352.5,509.7 354.6,501.4 356,495.8 359.5,499.3 361.2,511.1 362.6,541.9 363.7,562.1 365.8,560.7 367.9,562.1 370.7,560.7 374.9,562.6 379.1,563.5 384.7,562.8 390.3,563.1 394.5,561.4 398.6,563.5 404.2,562.6 408.4,562.1 414,559.3 416.8,562.8 420.3,560 423.8,562.8 430.8,562.1 433.6,557.9 435.7,562.1 440.6,561.4 446,563.5 450,562.5 454,561 458,563 462,561.5 466,560.5 470,562 474,560 477,561.5 479.5,562" fill="none" stroke="#ecbe26" stroke-width="1.05" stroke-linejoin="round" stroke-dasharray="1.15 0.75" stroke-linecap="butt" opacity="0.95"/><polyline points="59.9,546.1 63.0,541.6 66.5,544.0 70.0,545.0 72.5,542.6 74.9,541.6 77.7,547.2 82.5,542.6 85.3,547.5 88.1,544.0 90.9,544.4 95.5,546.4 97.9,543.3 102.8,547.2 107.7,542.6 110.2,548.9 112.6,549.6 115.4,550.5 117.5,534.9 120.3,534.2 122.8,539.8 125.2,544.0 127.9,548.2 130.0,547.5 132.8,543.3 135.6,546.1 138.4,547.5 142.6,543.0 145.4,549.6 148.2,544.7 150.3,541.9 153.1,522.3 155.5,520.9 156.9,539.1 157.7,569.8 159.4,571.2 200,570.9 250,570.8 300,571 343.5,570.9 346.3,513.9 348.4,526.5 350.9,523.7 353.2,520.9 356.0,507.7 358.8,515.3 360.9,513.2 363.4,569.8 365,570.9 400,571 440,570.8 479.5,570.9" fill="none" stroke="#2b98d0" stroke-width="1.2" stroke-linejoin="round" stroke-linecap="round" opacity="1"/><line x1="511.8" x2="932.0" y1="474.5" y2="474.5" stroke="#f1f1f1" stroke-width="1"/><line x1="511.8" x2="932.0" y1="490.9" y2="490.9" stroke="#f1f1f1" stroke-width="1"/><line x1="511.8" x2="932.0" y1="507.2" y2="507.2" stroke="#f1f1f1" stroke-width="1"/><line x1="511.8" x2="932.0" y1="523.6" y2="523.6" stroke="#f1f1f1" stroke-width="1"/><line x1="511.8" x2="932.0" y1="540" y2="540" stroke="#f1f1f1" stroke-width="1"/><line x1="511.8" x2="932.0" y1="556.5" y2="556.5" stroke="#f1f1f1" stroke-width="1"/><text x="510.1" y="476.5" text-anchor="end" font-size="6.3" fill="#4a4a4a">600</text><text x="510.1" y="492.9" text-anchor="end" font-size="6.3" fill="#4a4a4a">500</text><text x="510.1" y="509.2" text-anchor="end" font-size="6.3" fill="#4a4a4a">400</text><text x="510.1" y="525.6" text-anchor="end" font-size="6.3" fill="#4a4a4a">300</text><text x="510.1" y="542.0" text-anchor="end" font-size="6.3" fill="#4a4a4a">200</text><text x="510.1" y="558.5" text-anchor="end" font-size="6.3" fill="#4a4a4a">100</text><text x="510.1" y="575.0" text-anchor="end" font-size="6.3" fill="#4a4a4a">0</text><line x1="511.8" x2="932.0" y1="573.3" y2="573.3" stroke="#98a4c6" stroke-width="0.85"/><line x1="549.8" x2="549.8" y1="573.3" y2="575.5" stroke="#999" stroke-width="0.6"/><text x="549.8" y="581.7" text-anchor="middle" font-size="6.2" fill="#4a4a4a">Thu 16</text><line x1="609.9" x2="609.9" y1="573.3" y2="575.5" stroke="#999" stroke-width="0.6"/><text x="609.9" y="581.7" text-anchor="middle" font-size="6.2" fill="#4a4a4a">Fri 17</text><line x1="670.0" x2="670.0" y1="573.3" y2="575.5" stroke="#999" stroke-width="0.6"/><text x="670.0" y="581.7" text-anchor="middle" font-size="6.2" fill="#4a4a4a">Sat 18</text><line x1="730.1" x2="730.1" y1="573.3" y2="575.5" stroke="#999" stroke-width="0.6"/><text x="730.1" y="581.7" text-anchor="middle" font-size="6.2" fill="#4a4a4a">Nov 19</text><line x1="790.2" x2="790.2" y1="573.3" y2="575.5" stroke="#999" stroke-width="0.6"/><text x="790.2" y="581.7" text-anchor="middle" font-size="6.2" fill="#4a4a4a">Mon 20</text><line x1="850.3" x2="850.3" y1="573.3" y2="575.5" stroke="#999" stroke-width="0.6"/><text x="850.3" y="581.7" text-anchor="middle" font-size="6.2" fill="#4a4a4a">Tue 21</text><line x1="910.4" x2="910.4" y1="573.3" y2="575.5" stroke="#999" stroke-width="0.6"/><text x="910.4" y="581.7" text-anchor="middle" font-size="6.2" fill="#4a4a4a">Wed 22</text><polyline points="511.9,558.6 519.2,557.9 524.8,558.9 533.1,558.6 542.2,558.6 544.6,544 547.1,558.9 549.9,558.6 554.8,555.2 558.3,557.9 566.7,557.5 568.4,527.9 569.9,491.6 571.6,520.9 573.7,541.9 575.1,559.3 579.9,555.9 584.1,559.8 590.4,559.3 594.9,555.9 597.4,560 603,558.6 605.1,550.3 607.5,558.6 608.9,534.9 610.3,520.2 612.1,533.5 614.9,538.4 619.8,536.3 625,532.6 627.5,538.2 629.9,528.9 632.4,533.3 634.9,538.2 638,532.6 641.7,538.2 644.8,536.4 647.3,538.2 649.8,536.4 654.2,540.7 657.3,538.9 659.8,540.7 662.9,535.8 665,517.1 667.2,532.6 669.7,531.4 673.4,533.3 677.1,534.5 679.6,536.4 683.4,535.8 687.1,538.9 689.6,537 693.3,541.3 697,538.2 702,536.4 705.7,533.3 709.4,533.3 712.5,533 716.9,540.1 720.6,538.9 723.1,532 725.2,508.4 727.1,530.8 728.1,540.7 730.3,542.6 733,533.3 734.9,536.4 739.3,533.3 743,532 745.5,538.2 748,539.5 750.4,536.4 754.2,534.5 757.9,530.8 760.4,537 762.5,531.4 765.3,537.6 767.8,539.5 770.9,537 774,538.9 777.1,537.6 780.2,537 783,539.8 785.5,507.7 787.9,537.7 790,539.8 792.8,534.2 794.9,534.9 797.7,558.7 801.2,558 803.9,556.6 807.4,558.7 810.2,557.3 813,558.7 815.1,540.5 817.9,527.2 820.4,539.8 823.5,537.7 827,537 830.2,530 833,541.9 835.4,539.8 838.2,544 841,542.6 843.1,532.1 845.5,520.9 848,539.8 850.8,539.1 852.9,541.9 855.7,534.9 858.4,537 860.8,530.7 863.3,537.7 866.8,536.3 870.3,536.6 873.1,534.9 877.3,539.8 880.8,535.6 883.6,541.2 886.4,537.7 889.9,539.8 893.4,542.6 896.2,539.1 899,540.8 903.2,536.3 904.6,513.9 905.7,496.5 907.1,513.9 908.1,534.2 910.9,534.9 913.6,537.7 915.7,533.5 918.5,537 923,530 927.6,535.6 930.4,534.9" fill="none" stroke="#ecbe26" stroke-width="1.05" stroke-linejoin="round" stroke-dasharray="1.15 0.75" stroke-linecap="butt" opacity="0.95"/><polyline points="511.9,570.5 535.9,570.5 544.3,569.8 567.4,570.2 569.9,551.9 572.3,561.4 574.8,570.2 604.4,570.2 607.5,569.8 610,565.9 614.2,566.3 619.8,565.6 627.5,565.6 634.9,566.6 637.4,565.3 642.4,566.6 647.3,567.1 654.8,565.8 659.8,567.4 664.7,564.3 669.7,566.8 672.2,565.3 678.4,566.6 684.6,566.2 692,566.6 699.5,565.8 704.5,567.1 714.4,566.8 721.9,566.6 725.2,564.3 728.1,567.1 736.8,565.6 744.2,566.6 751.7,566.8 760.4,565.6 766.6,567.1 772.8,566.2 776,567.1 781.6,566.4 785.5,565.4 790,567.3 793.5,565.7 798.4,570.3 812.3,570.3 816.5,565.9 824.9,566.8 834.7,566.4 841.7,566.8 845.5,565 848.7,566.8 857.1,566.4 863.3,565.4 869.6,567.1 873.8,565.7 882.2,566.8 885.7,565.9 892,567.1 901.8,566.8 905.7,564.3 910.2,567.1 918.5,565.7 922.7,566.4 926.2,565.7 930.4,566.4" fill="none" stroke="#2b98d0" stroke-width="1.2" stroke-linejoin="round" stroke-linecap="round" opacity="1"/><line x1="963.8" x2="1384.0" y1="475" y2="475" stroke="#f1f1f1" stroke-width="1"/><line x1="963.8" x2="1384.0" y1="495.4" y2="495.4" stroke="#f1f1f1" stroke-width="1"/><line x1="963.8" x2="1384.0" y1="516" y2="516" stroke="#f1f1f1" stroke-width="1"/><line x1="963.8" x2="1384.0" y1="536.4" y2="536.4" stroke="#f1f1f1" stroke-width="1"/><text x="962.1" y="477.0" text-anchor="end" font-size="6.3" fill="#4a4a4a">8</text><text x="962.1" y="497.4" text-anchor="end" font-size="6.3" fill="#4a4a4a">6</text><text x="962.1" y="518.0" text-anchor="end" font-size="6.3" fill="#4a4a4a">4</text><text x="962.1" y="538.4" text-anchor="end" font-size="6.3" fill="#4a4a4a">2</text><text x="962.1" y="558.7" text-anchor="end" font-size="6.3" fill="#4a4a4a">0</text><line x1="963.8" x2="1384.0" y1="557" y2="557" stroke="#dccd8c" stroke-width="1.6"/><line x1="1001.8" x2="1001.8" y1="557" y2="559.2" stroke="#999" stroke-width="0.6"/><text x="1001.8" y="565.4" text-anchor="middle" font-size="6.2" fill="#4a4a4a">Thu 16</text><line x1="1061.9" x2="1061.9" y1="557" y2="559.2" stroke="#999" stroke-width="0.6"/><text x="1061.9" y="565.4" text-anchor="middle" font-size="6.2" fill="#4a4a4a">Fri 17</text><line x1="1122.0" x2="1122.0" y1="557" y2="559.2" stroke="#999" stroke-width="0.6"/><text x="1122.0" y="565.4" text-anchor="middle" font-size="6.2" fill="#4a4a4a">Sat 18</text><line x1="1182.1" x2="1182.1" y1="557" y2="559.2" stroke="#999" stroke-width="0.6"/><text x="1182.1" y="565.4" text-anchor="middle" font-size="6.2" fill="#4a4a4a">Nov 19</text><line x1="1242.2" x2="1242.2" y1="557" y2="559.2" stroke="#999" stroke-width="0.6"/><text x="1242.2" y="565.4" text-anchor="middle" font-size="6.2" fill="#4a4a4a">Mon 20</text><line x1="1302.3" x2="1302.3" y1="557" y2="559.2" stroke="#999" stroke-width="0.6"/><text x="1302.3" y="565.4" text-anchor="middle" font-size="6.2" fill="#4a4a4a">Tue 21</text><line x1="1362.4" x2="1362.4" y1="557" y2="559.2" stroke="#999" stroke-width="0.6"/><text x="1362.4" y="565.4" text-anchor="middle" font-size="6.2" fill="#4a4a4a">Wed 22</text><polyline points="963.9,527.9 966.7,527.9 969.1,524.3 971.7,528.3 976,527.6 987.4,527.9 991.7,528.9 1001.7,528.3 1006,527.6 1013.1,528.1 1017.4,527.1 1019.6,522.9 1021.7,508.6 1023.9,520 1026.7,523.1 1029.6,523.1 1031.7,521.7 1033.9,526 1038.9,526.7 1043.1,527.9 1047.4,528.3 1051,527.1 1056,528.6 1061.7,526.4 1070.3,527.1 1080.3,526.1 1087.4,526.9 1096,526.5 1118.9,526.1 1144,527.2 1155.4,524.6 1164.6,523.8 1171.4,524.9 1184,523.8 1189.7,526.9 1210.3,526.5 1217.1,527.7 1233.1,526.5 1243.1,525.7 1247.4,524.3 1249.6,520 1252.4,525 1256,525 1258.1,512.9 1259.9,495 1261.7,511.4 1264.6,520.7 1267.4,522.9 1271.7,521.1 1278.1,520 1283.1,521.7 1291.7,522.6 1297.4,524 1303.9,524.3 1308.1,526 1317.4,525.4 1331.7,524.7 1347.4,525.7 1351.7,528.3 1360.3,527.4 1371.7,527.4 1377.4,528.6 1383.1,527.9" fill="none" stroke="#8e84b4" stroke-width="1.0" stroke-linejoin="round" stroke-dasharray="1 0.85" stroke-linecap="butt" opacity="0.95"/><polyline points="963.9,540.7 1018.9,540.7 1021.7,534.6 1024.6,539.7 1033.1,540.3 1056,540.9 1064.6,541.7 1084.6,541.1 1096,540.9 1125.7,541.7 1147.4,540.6 1164.6,540.2 1189.7,541.4 1221.7,540.9 1246.9,541.1 1249.7,539.4 1252.4,541 1256.7,541 1259.9,530.7 1262.4,537.9 1266.7,540.7 1278.9,540.4 1297.4,541 1326,541.1 1354.6,541.7 1383.1,541.7" fill="none" stroke="#9c88cc" stroke-width="1.25" stroke-linejoin="round" stroke-linecap="round" opacity="1"/><g fill="#f4f2f6"><path d="M6,4.3 C4.9,5.6 5.2,7.6 7,8.3 L8.5,9.6 C8.4,11 8.9,12 9.5,12.8 L8,17 C6,17.6 5.7,20.6 7.5,21.6 C9.5,22.4 11,21 11,19 L12.2,14.2 L17,12.6 C19,12 19.6,10 18.6,8.6 L17.5,5.6 C18.7,4.6 19.6,3.5 19,2.5 C17.5,1.7 16,2.5 15.5,4 C13,3.2 10.5,3.5 9.5,4 C8.5,2.8 7,3 6,4.3 Z"/><path d="M13,13.9 L22.6,12.2 L23.5,18.7 L13.8,20.4 Z" fill="#e6e3ea"/></g><path d="M14.7,19.3 L14.4,17.9 L16,16 L17.2,17.3 L18.8,15 L20,16.5 L21.8,14 L22.4,17.9 Z" fill="#3f3946"/><circle cx="12.6" cy="7.4" r="0.75" fill="#2e2935"/><circle cx="17.2" cy="10" r="0.85" fill="#2e2935"/><circle cx="7.4" cy="5.6" r="0.9" fill="#cfcbd6"/><circle cx="8.3" cy="19.3" r="1.1" fill="#d6d2dc"/><g fill="none" stroke="#7d7787" stroke-width="0.9"><rect x="9.5" y="89.7" width="8.4" height="6.4"/><path d="M9.5,91.6 H17.9 M12.3,91.6 V96 M15.1,91.6 V96 M9.5,93.8 H17.9"/></g><rect x="9.5" y="89.5" width="8.4" height="1.6" fill="#7d7787"/><path d="M9.2,118.9 L9.2,110.6 L10.4,110.6 L10.4,113.8 L12,111.6 L13.8,114.6 L15.6,112.4 L18.9,117.2 L18.9,118.9 Z" fill="#ffffff"/><g fill="#7d7787"><circle cx="11" cy="133.6" r="1.7"/><circle cx="13.9" cy="138" r="2"/><circle cx="16.2" cy="133.4" r="1.5" fill="none" stroke="#7d7787" stroke-width="0.7"/><path d="M11,133.6 L13.9,138 L16.2,133.4" fill="none" stroke="#7d7787" stroke-width="0.6"/></g><circle cx="13.6" cy="156.9" r="3.7" fill="#c4c0cb"/><rect x="12.8" y="154.2" width="1.4" height="3.4" fill="#332e3a"/><rect x="12.8" y="158.3" width="1.4" height="1.3" fill="#332e3a"/><path d="M10.2,182.4 A4.1,4.1 0 1 1 17,182.4" fill="none" stroke="#b9b5c1" stroke-width="1.3"/><path d="M13.3,181.6 L15.6,177.4" stroke="#b9b5c1" stroke-width="1.2" fill="none"/><g fill="#e2dfe6"><rect x="9.6" y="198.2" width="6.2" height="5.4"/><circle cx="12.6" cy="197.4" r="1.3"/><circle cx="16.6" cy="200.8" r="1.3"/><rect x="9" y="200" width="1.2" height="1.8" fill="#2f2a36"/></g><g fill="#9a95a4"><rect x="9" y="217" width="9.6" height="1.3"/><rect x="10.2" y="218.9" width="7.2" height="0.8"/><rect x="10.2" y="220.3" width="7.2" height="0.8"/><rect x="10.2" y="221.7" width="7.2" height="0.6"/><rect x="13.3" y="222.3" width="1" height="2.4"/></g><g><path d="M11.2,238.7 L18.2,238.7 L16.6,245.4 L9.6,245.4 Z" fill="#b8b4c1"/><path d="M9.6,245.4 L9.9,246.9 L16.3,246.9 L16.6,245.4" fill="none" stroke="#b8b4c1" stroke-width="0.7"/><path d="M12.5,240.3 L16.2,240.3 M12.1,241.9 L15.8,241.9" stroke="#4a4452" stroke-width="0.6"/></g><path d="M21.2,113.3 L22.6,114.8 L21.2,116.3" fill="none" stroke="#625c6c" stroke-width="0.7"/><path d="M21.2,134.5 L22.6,136 L21.2,137.5" fill="none" stroke="#625c6c" stroke-width="0.7"/><path d="M21.2,155.8 L22.6,157.3 L21.2,158.8" fill="none" stroke="#625c6c" stroke-width="0.7"/><path d="M21.2,177.1 L22.6,178.6 L21.2,180.1" fill="none" stroke="#625c6c" stroke-width="0.7"/><path d="M21.2,198.5 L22.6,200 L21.2,201.5" fill="none" stroke="#625c6c" stroke-width="0.7"/><path d="M21.2,219.7 L22.6,221.2 L21.2,222.7" fill="none" stroke="#625c6c" stroke-width="0.7"/><path d="M21.2,240.9 L22.6,242.4 L21.2,243.9" fill="none" stroke="#625c6c" stroke-width="0.7"/><circle cx="13.8" cy="637" r="3.6" fill="#bdb9c4"/><polygon points="34.60,6.20 35.83,9.00 38.88,9.31 36.60,11.35 37.25,14.34 34.60,12.80 31.95,14.34 32.60,11.35 30.32,9.31 33.37,9.00" fill="none" stroke="#949494" stroke-width="0.75" stroke-linejoin="round"/><circle cx="234.3" cy="34.5" r="3.6" fill="#2a8ccd"/><circle cx="50.1" cy="65.6" r="2.8" fill="none" stroke="#8a8a8a" stroke-width="1"/><path d="M52.2,67.7 L54.5,70" stroke="#8a8a8a" stroke-width="1.2" stroke-linecap="round"/><circle cx="397.8" cy="66.2" r="2.5" fill="none" stroke="#777" stroke-width="1.1"/><circle cx="411.1" cy="66.5" r="3.2" fill="#d4ecfa" stroke="#3a96d6" stroke-width="1.1"/><path d="M411.1,62.6 V66.5" stroke="#1f6fa8" stroke-width="1.1"/><path d="M409.6,65.9 L412.6,65.9 L411.1,67.9z" fill="#1f6fa8"/><path d="M638.6,63.9 L638.6,69 L635.7,66.45z M641.8,63.9 L641.8,69 L638.9,66.45z" fill="#2a7fb5"/><rect x="651.9" y="62.9" width="2.7" height="6.8" fill="#fff"/><rect x="656.1" y="62.9" width="2.7" height="6.8" fill="#fff"/><path d="M668.8,63.9 L668.8,69 L671.7,66.45z M672,63.9 L672,69 L674.9,66.45z" fill="#adadad"/><rect x="1340" y="7.4" width="6.9" height="4.5" fill="#fff" stroke="#666" stroke-width="0.9"/><path d="M1341.5,12.4 H1345.4 L1343.45,13.6z" fill="#666"/><circle cx="1359.7" cy="10.6" r="3.3" fill="#666"/><rect x="1359.2" y="8.4" width="1" height="1" fill="#fff"/><rect x="1359.2" y="10" width="1" height="2.8" fill="#fff"/><g transform="translate(1376.6,10.8)" fill="#666"><circle r="2.13" fill="none" stroke="#666" stroke-width="1.60"/><rect x="-0.80" y="-3.80" width="1.60" height="1.37" transform="rotate(0)"/><rect x="-0.80" y="-3.80" width="1.60" height="1.37" transform="rotate(45)"/><rect x="-0.80" y="-3.80" width="1.60" height="1.37" transform="rotate(90)"/><rect x="-0.80" y="-3.80" width="1.60" height="1.37" transform="rotate(135)"/><rect x="-0.80" y="-3.80" width="1.60" height="1.37" transform="rotate(180)"/><rect x="-0.80" y="-3.80" width="1.60" height="1.37" transform="rotate(225)"/><rect x="-0.80" y="-3.80" width="1.60" height="1.37" transform="rotate(270)"/><rect x="-0.80" y="-3.80" width="1.60" height="1.37" transform="rotate(315)"/></g><rect x="1369.4" y="63.6" width="8.6" height="5.4" rx="0.5" fill="#9b9b9b"/><path d="M1370.4,65 H1377 M1370.4,66.3 H1377" stroke="#e4e4e4" stroke-width="0.7" stroke-dasharray="0.9 0.5"/><path d="M1371.6,67.7 H1375.8" stroke="#e4e4e4" stroke-width="0.7"/><g transform="translate(476.2,92.2)" fill="#858585"><circle r="2.24" fill="none" stroke="#858585" stroke-width="1.68"/><rect x="-0.84" y="-4.00" width="1.68" height="1.44" transform="rotate(0)"/><rect x="-0.84" y="-4.00" width="1.68" height="1.44" transform="rotate(45)"/><rect x="-0.84" y="-4.00" width="1.68" height="1.44" transform="rotate(90)"/><rect x="-0.84" y="-4.00" width="1.68" height="1.44" transform="rotate(135)"/><rect x="-0.84" y="-4.00" width="1.68" height="1.44" transform="rotate(180)"/><rect x="-0.84" y="-4.00" width="1.68" height="1.44" transform="rotate(225)"/><rect x="-0.84" y="-4.00" width="1.68" height="1.44" transform="rotate(270)"/><rect x="-0.84" y="-4.00" width="1.68" height="1.44" transform="rotate(315)"/></g><g transform="translate(464.1,92.3) rotate(45)" fill="#8a8a8a"><rect x="-1" y="-4.6" width="2" height="1.3"/><rect x="-1" y="-2.9" width="2" height="4.6"/><path d="M-1,2 L1,2 L0,4.6z"/></g><g transform="translate(928.2,92.2)" fill="#858585"><circle r="2.24" fill="none" stroke="#858585" stroke-width="1.68"/><rect x="-0.84" y="-4.00" width="1.68" height="1.44" transform="rotate(0)"/><rect x="-0.84" y="-4.00" width="1.68" height="1.44" transform="rotate(45)"/><rect x="-0.84" y="-4.00" width="1.68" height="1.44" transform="rotate(90)"/><rect x="-0.84" y="-4.00" width="1.68" height="1.44" transform="rotate(135)"/><rect x="-0.84" y="-4.00" width="1.68" height="1.44" transform="rotate(180)"/><rect x="-0.84" y="-4.00" width="1.68" height="1.44" transform="rotate(225)"/><rect x="-0.84" y="-4.00" width="1.68" height="1.44" transform="rotate(270)"/><rect x="-0.84" y="-4.00" width="1.68" height="1.44" transform="rotate(315)"/></g><g transform="translate(916.1,92.3) rotate(45)" fill="#8a8a8a"><rect x="-1" y="-4.6" width="2" height="1.3"/><rect x="-1" y="-2.9" width="2" height="4.6"/><path d="M-1,2 L1,2 L0,4.6z"/></g><g transform="translate(1380.2,92.2)" fill="#858585"><circle r="2.24" fill="none" stroke="#858585" stroke-width="1.68"/><rect x="-0.84" y="-4.00" width="1.68" height="1.44" transform="rotate(0)"/><rect x="-0.84" y="-4.00" width="1.68" height="1.44" transform="rotate(45)"/><rect x="-0.84" y="-4.00" width="1.68" height="1.44" transform="rotate(90)"/><rect x="-0.84" y="-4.00" width="1.68" height="1.44" transform="rotate(135)"/><rect x="-0.84" y="-4.00" width="1.68" height="1.44" transform="rotate(180)"/><rect x="-0.84" y="-4.00" width="1.68" height="1.44" transform="rotate(225)"/><rect x="-0.84" y="-4.00" width="1.68" height="1.44" transform="rotate(270)"/><rect x="-0.84" y="-4.00" width="1.68" height="1.44" transform="rotate(315)"/></g><g transform="translate(1368.1,92.3) rotate(45)" fill="#8a8a8a"><rect x="-1" y="-4.6" width="2" height="1.3"/><rect x="-1" y="-2.9" width="2" height="4.6"/><path d="M-1,2 L1,2 L0,4.6z"/></g><g transform="translate(476.2,278.6)" fill="#858585"><circle r="2.24" fill="none" stroke="#858585" stroke-width="1.68"/><rect x="-0.84" y="-4.00" width="1.68" height="1.44" transform="rotate(0)"/><rect x="-0.84" y="-4.00" width="1.68" height="1.44" transform="rotate(45)"/><rect x="-0.84" y="-4.00" width="1.68" height="1.44" transform="rotate(90)"/><rect x="-0.84" y="-4.00" width="1.68" height="1.44" transform="rotate(135)"/><rect x="-0.84" y="-4.00" width="1.68" height="1.44" transform="rotate(180)"/><rect x="-0.84" y="-4.00" width="1.68" height="1.44" transform="rotate(225)"/><rect x="-0.84" y="-4.00" width="1.68" height="1.44" transform="rotate(270)"/><rect x="-0.84" y="-4.00" width="1.68" height="1.44" transform="rotate(315)"/></g><g transform="translate(464.1,278.70000000000005) rotate(45)" fill="#8a8a8a"><rect x="-1" y="-4.6" width="2" height="1.3"/><rect x="-1" y="-2.9" width="2" height="4.6"/><path d="M-1,2 L1,2 L0,4.6z"/></g><g transform="translate(928.2,278.6)" fill="#858585"><circle r="2.24" fill="none" stroke="#858585" stroke-width="1.68"/><rect x="-0.84" y="-4.00" width="1.68" height="1.44" transform="rotate(0)"/><rect x="-0.84" y="-4.00" width="1.68" height="1.44" transform="rotate(45)"/><rect x="-0.84" y="-4.00" width="1.68" height="1.44" transform="rotate(90)"/><rect x="-0.84" y="-4.00" width="1.68" height="1.44" transform="rotate(135)"/><rect x="-0.84" y="-4.00" width="1.68" height="1.44" transform="rotate(180)"/><rect x="-0.84" y="-4.00" width="1.68" height="1.44" transform="rotate(225)"/><rect x="-0.84" y="-4.00" width="1.68" height="1.44" transform="rotate(270)"/><rect x="-0.84" y="-4.00" width="1.68" height="1.44" transform="rotate(315)"/></g><g transform="translate(916.1,278.70000000000005) rotate(45)" fill="#8a8a8a"><rect x="-1" y="-4.6" width="2" height="1.3"/><rect x="-1" y="-2.9" width="2" height="4.6"/><path d="M-1,2 L1,2 L0,4.6z"/></g><g transform="translate(904.7,278.8)"><path d="M-4.2,-2.2 L-1.8,-2.2 L-1.1,-3.5 L1.1,-3.5 L1.8,-2.2 L4.2,-2.2 L4.2,3.4 L-4.2,3.4z" fill="#6f6f6f"/><circle cx="0" cy="0.5" r="1.9" fill="#e8e8e8"/><circle cx="0" cy="0.5" r="0.9" fill="#6f6f6f"/></g><g transform="translate(892.7,278.8)" fill="#6f6f6f" stroke="#6f6f6f"><path d="M-2.4,-2.4 L2.4,2.4 M-2.4,2.4 L2.4,-2.4" stroke-width="1.1"/><rect x="-3.6" y="-3.6" width="2" height="2" stroke="none"/><rect x="1.6" y="-3.6" width="2" height="2" stroke="none"/><rect x="1.6" y="1.6" width="2" height="2" stroke="none"/><rect x="-3.6" y="1.6" width="2" height="2" stroke="none"/></g><g transform="translate(1380.2,278.6)" fill="#858585"><circle r="2.24" fill="none" stroke="#858585" stroke-width="1.68"/><rect x="-0.84" y="-4.00" width="1.68" height="1.44" transform="rotate(0)"/><rect x="-0.84" y="-4.00" width="1.68" height="1.44" transform="rotate(45)"/><rect x="-0.84" y="-4.00" width="1.68" height="1.44" transform="rotate(90)"/><rect x="-0.84" y="-4.00" width="1.68" height="1.44" transform="rotate(135)"/><rect x="-0.84" y="-4.00" width="1.68" height="1.44" transform="rotate(180)"/><rect x="-0.84" y="-4.00" width="1.68" height="1.44" transform="rotate(225)"/><rect x="-0.84" y="-4.00" width="1.68" height="1.44" transform="rotate(270)"/><rect x="-0.84" y="-4.00" width="1.68" height="1.44" transform="rotate(315)"/></g><g transform="translate(1368.1,278.70000000000005) rotate(45)" fill="#8a8a8a"><rect x="-1" y="-4.6" width="2" height="1.3"/><rect x="-1" y="-2.9" width="2" height="4.6"/><path d="M-1,2 L1,2 L0,4.6z"/></g><g transform="translate(476.2,464.8)" fill="#858585"><circle r="2.24" fill="none" stroke="#858585" stroke-width="1.68"/><rect x="-0.84" y="-4.00" width="1.68" height="1.44" transform="rotate(0)"/><rect x="-0.84" y="-4.00" width="1.68" height="1.44" transform="rotate(45)"/><rect x="-0.84" y="-4.00" width="1.68" height="1.44" transform="rotate(90)"/><rect x="-0.84" y="-4.00" width="1.68" height="1.44" transform="rotate(135)"/><rect x="-0.84" y="-4.00" width="1.68" height="1.44" transform="rotate(180)"/><rect x="-0.84" y="-4.00" width="1.68" height="1.44" transform="rotate(225)"/><rect x="-0.84" y="-4.00" width="1.68" height="1.44" transform="rotate(270)"/><rect x="-0.84" y="-4.00" width="1.68" height="1.44" transform="rotate(315)"/></g><g transform="translate(464.1,464.90000000000003) rotate(45)" fill="#8a8a8a"><rect x="-1" y="-4.6" width="2" height="1.3"/><rect x="-1" y="-2.9" width="2" height="4.6"/><path d="M-1,2 L1,2 L0,4.6z"/></g><g transform="translate(928.2,464.8)" fill="#858585"><circle r="2.24" fill="none" stroke="#858585" stroke-width="1.68"/><rect x="-0.84" y="-4.00" width="1.68" height="1.44" transform="rotate(0)"/><rect x="-0.84" y="-4.00" width="1.68" height="1.44" transform="rotate(45)"/><rect x="-0.84" y="-4.00" width="1.68" height="1.44" transform="rotate(90)"/><rect x="-0.84" y="-4.00" width="1.68" height="1.44" transform="rotate(135)"/><rect x="-0.84" y="-4.00" width="1.68" height="1.44" transform="rotate(180)"/><rect x="-0.84" y="-4.00" width="1.68" height="1.44" transform="rotate(225)"/><rect x="-0.84" y="-4.00" width="1.68" height="1.44" transform="rotate(270)"/><rect x="-0.84" y="-4.00" width="1.68" height="1.44" transform="rotate(315)"/></g><g transform="translate(916.1,464.90000000000003) rotate(45)" fill="#8a8a8a"><rect x="-1" y="-4.6" width="2" height="1.3"/><rect x="-1" y="-2.9" width="2" height="4.6"/><path d="M-1,2 L1,2 L0,4.6z"/></g><g transform="translate(1380.2,464.8)" fill="#858585"><circle r="2.24" fill="none" stroke="#858585" stroke-width="1.68"/><rect x="-0.84" y="-4.00" width="1.68" height="1.44" transform="rotate(0)"/><rect x="-0.84" y="-4.00" width="1.68" height="1.44" transform="rotate(45)"/><rect x="-0.84" y="-4.00" width="1.68" height="1.44" transform="rotate(90)"/><rect x="-0.84" y="-4.00" width="1.68" height="1.44" transform="rotate(135)"/><rect x="-0.84" y="-4.00" width="1.68" height="1.44" transform="rotate(180)"/><rect x="-0.84" y="-4.00" width="1.68" height="1.44" transform="rotate(225)"/><rect x="-0.84" y="-4.00" width="1.68" height="1.44" transform="rotate(270)"/><rect x="-0.84" y="-4.00" width="1.68" height="1.44" transform="rotate(315)"/></g><g transform="translate(1368.1,464.90000000000003) rotate(45)" fill="#8a8a8a"><rect x="-1" y="-4.6" width="2" height="1.3"/><rect x="-1" y="-2.9" width="2" height="4.6"/><path d="M-1,2 L1,2 L0,4.6z"/></g></svg>
<div class="abs" style="left:232.4px;top:30.8px;font-size:6.4px;line-height:8px;font-weight:bold;color:#fff">?</div>
<div class="abs" style="left:12.1px;top:633.2px;font-size:6.4px;line-height:8px;font-weight:bold;color:#2a2530">?</div>
</div></body></html>
